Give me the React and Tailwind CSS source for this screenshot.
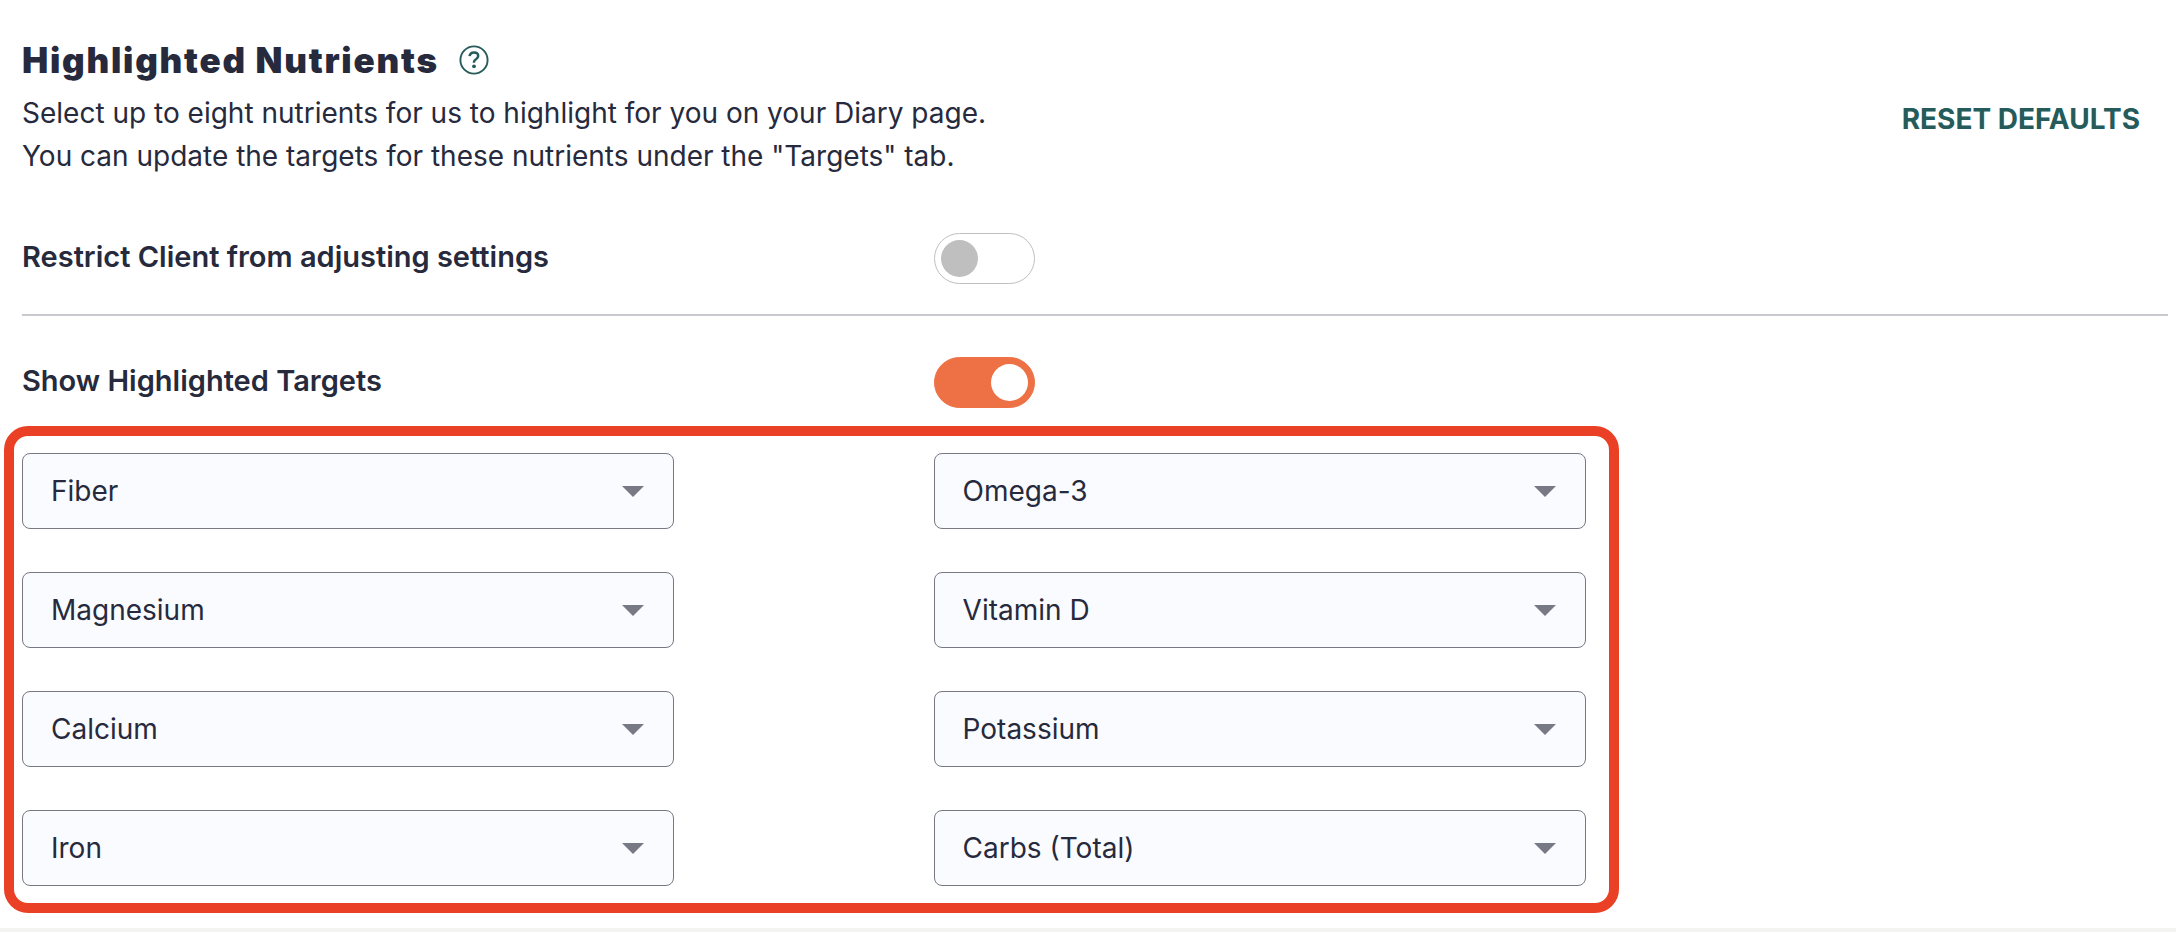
import { useState } from "react";

const NUTRIENTS = [
  "Fiber",
  "Omega-3",
  "Magnesium",
  "Vitamin D",
  "Calcium",
  "Potassium",
  "Iron",
  "Carbs (Total)",
];

function HelpIcon() {
  return (
    <svg viewBox="0 0 30 30" className="size-[30px]" fill="none" stroke="#265b5b" aria-hidden="true">
      <circle cx="15" cy="15" r="13.6" strokeWidth="1.9" />
      <path
        d="M10.600 11.200c.3-2.200 1.900-3.700 4.400-3.700 2.500 0 4.200 1.400 4.200 3.500 0 1.600-.9 2.400-2.200 3.200-1.400.9-2 1.500-2 2.700v.8"
        strokeWidth="2.500"
      />
      <circle cx="15" cy="21.300" r="1.900" fill="#265b5b" stroke="none" />
    </svg>
  );
}

function Toggle({ id, checked, onChange }) {
  return (
    <input
      id={id}
      type="checkbox"
      role="switch"
      checked={checked}
      onChange={(e) => onChange(e.target.checked)}
      className="flex h-[51px] w-[101px] cursor-pointer appearance-none items-center rounded-full border border-[#bfbfbf] bg-white px-1.5 before:size-[37px] before:rounded-full before:bg-[#bfbfbf] before:content-[''] checked:justify-end checked:border-[#ee7145] checked:bg-[#ee7145] checked:before:bg-white"
    />
  );
}

function SettingRow({ id, label, checked, onChange }) {
  return (
    <div className="grid grid-cols-[42.5%_1fr] items-center">
      <label htmlFor={id} className="pb-1 text-[29px] font-semibold leading-[43px]">
        {label}
      </label>
      <Toggle id={id} checked={checked} onChange={onChange} />
    </div>
  );
}

function NutrientSelect({ index, value, onChange }) {
  return (
    <div className="relative">
      <select
        aria-label={`Highlighted nutrient ${index + 1}`}
        value={value}
        onChange={(e) => onChange(e.target.value)}
        className="h-[76px] w-full appearance-none rounded-lg border border-[#777984] bg-[#fafbff] pl-7 pr-16 text-[28px]"
      >
        {NUTRIENTS.map((name) => (
          <option key={name}>{name}</option>
        ))}
      </select>
      <svg
        viewBox="0 0 22 11"
        className="pointer-events-none absolute right-[30px] top-[33px] h-[11px] w-[22px]"
        fill="#777984"
        aria-hidden="true"
      >
        <path d="M0 0h22L11 11z" />
      </svg>
    </div>
  );
}

export default function App() {
  const [restricted, setRestricted] = useState(false);
  const [shown, setShown] = useState(true);
  const [selected, setSelected] = useState(NUTRIENTS);

  return (
    <div className="flex min-h-screen flex-col bg-white font-['Inter',sans-serif] text-[#262a3c]">
      <main className="grow pb-[15px] pt-10">
        <div className="pl-[22px] pr-2">
          <header className="flex items-center justify-between">
            <div>
              <div className="flex items-center gap-5">
                <h1 className="text-[35px] font-black leading-10 tracking-wider">Highlighted Nutrients</h1>
                <button type="button" aria-label="Help">
                  <HelpIcon />
                </button>
              </div>
              <p className="mt-3 text-[28px] leading-[43px]">
                Select up to eight nutrients for us to highlight for you on your Diary page.
                <br />
                You can update the targets for these nutrients under the "Targets" tab.
              </p>
            </div>
            <button type="button" className="mt-5 pr-7 text-[28px] font-bold leading-[43px] text-[#265b5b]">
              RESET DEFAULTS
            </button>
          </header>
          <div className="mt-[55px]">
            <SettingRow
              id="restrict"
              label="Restrict Client from adjusting settings"
              checked={restricted}
              onChange={setRestricted}
            />
          </div>
          <hr className="mb-[41px] mt-[30px] border-t-2 border-[#c8c8ce]" />
          <SettingRow id="show" label="Show Highlighted Targets" checked={shown} onChange={setShown} />
        </div>
        <section
          aria-label="Nutrients"
          className="ml-1 mt-[18px] grid w-[74.2%] grid-cols-2 gap-x-[16.6%] gap-y-[43px] rounded-3xl border-10 border-[#ea4025] py-[17px] pl-2 pr-[23px]"
        >
          {selected.map((value, i) => (
            <NutrientSelect
              key={i}
              index={i}
              value={value}
              onChange={(next) => setSelected(selected.map((v, j) => (j === i ? next : v)))}
            />
          ))}
        </section>
      </main>
      <footer className="h-1 bg-[#f3f3f2]" />
    </div>
  );
}
